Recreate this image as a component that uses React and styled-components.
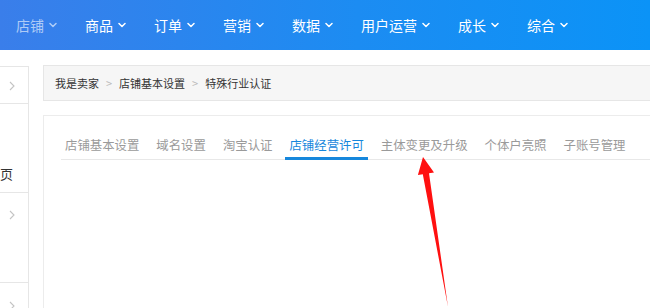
import React from 'react'
import styled, { createGlobalStyle } from 'styled-components'

const colors = {
  navLeft: '#3a7eea',
  navMid: '#1c8cf2',
  navRight: '#0b93f7',
  border: '#e6e6e6',
  crumbBg: '#f6f6f6',
  text: '#333333',
  muted: '#9a9a9a',
  active: '#1687dc',
  arrow: '#ff1010'
}

const GlobalStyle = createGlobalStyle`
  html, body {
    margin: 0;
    padding: 0;
    background: #ffffff;
    overflow: hidden;
  }

  body {
    font-family: "Noto Sans CJK SC", "Noto Sans", sans-serif;
  }
`

// ======================
// LAYOUT
// ======================

const Page = styled.div`
  position: relative;
  width: 650px;
  height: 308px;
  overflow: hidden;
`

const Body = styled.div`
  display: flex;
  height: 258px;
`

// ======================
// TOP NAV
// ======================

const Nav = styled.nav`
  display: flex;
  align-items: center;
  gap: 28px;
  height: 50px;
  padding-left: 16px;
  background: linear-gradient(to right, ${colors.navLeft} 0%, ${colors.navMid} 55%, ${colors.navRight} 100%);
`

const NavItem = styled.div`
  display: flex;
  align-items: center;
  gap: 5px;
  font-size: 14px;
  line-height: 20px;
  color: ${props => props.current ? 'rgba(255, 255, 255, 0.6)' : '#ffffff'};
  white-space: nowrap;
`

const Caret = ({ color }) => (
  <svg width='8' height='6' viewBox='0 0 8 6'>
    <polyline points='1,1.5 4,4.5 7,1.5' fill='none' stroke={color} strokeWidth='1.5' strokeLinecap='round' strokeLinejoin='round' />
  </svg>
)

// ======================
// SIDEBAR
// ======================

const Sidebar = styled.aside`
  flex: 0 0 28px;
  margin-top: 16px;
  border-top: 1px solid ${colors.border};
  border-right: 1px solid ${colors.border};
  overflow: hidden;
`

const SideRow = styled.div`
  display: flex;
  align-items: ${props => props.bottom ? 'flex-end' : 'flex-start'};
  justify-content: flex-end;
  height: ${props => props.h}px;
  padding: ${props => props.pad};
  box-sizing: border-box;
  border-bottom: ${props => props.last ? 'none' : `1px solid ${colors.border}`};
  font-size: 13px;
  line-height: 18px;
  color: ${colors.text};
  white-space: nowrap;
`

const Chevron = () => (
  <svg width='6' height='10' viewBox='0 0 6 10'>
    <polyline points='1,1 5,5 1,9' fill='none' stroke='#c4c4c4' strokeWidth='1.1' />
  </svg>
)

// ======================
// MAIN
// ======================

const Main = styled.main`
  flex: 1;
  margin-left: 14px;
  padding-top: 15px;
  min-width: 0;
`

const Breadcrumb = styled.div`
  display: flex;
  align-items: center;
  height: 34px;
  padding-left: 11px;
  border: 1px solid ${colors.border};
  border-right: none;
  background: ${colors.crumbBg};
  font-size: 11px;
  color: ${colors.text};
`

const Sep = styled.span`
  margin: 0 7px;
  color: #bbbbbb;
`

const Panel = styled.section`
  margin-top: 14px;
  height: 200px;
  border: 1px solid #ececec;
  border-right: none;
  border-bottom: none;
`

const TabBar = styled.div`
  display: flex;
  margin: 20px 0 0 17px;
  border-bottom: 1px solid #e8e8e8;
`

const Tab = styled.div`
  padding: 0 4px 3px;
  margin-right: 9px;
  margin-bottom: -1px;
  font-size: 12.4px;
  line-height: 18px;
  white-space: nowrap;
  color: ${props => props.active ? colors.active : colors.muted};
  border-bottom: 3px solid ${props => props.active ? colors.active : 'transparent'};
`

// ======================
// ANNOTATION
// ======================

const Arrow = styled.svg`
  position: absolute;
  left: 0;
  top: 0;
  pointer-events: none;
`

const navItems = ['店铺', '商品', '订单', '营销', '数据', '用户运营', '成长', '综合']
const tabs = ['店铺基本设置', '域名设置', '淘宝认证', '店铺经营许可', '主体变更及升级', '个体户亮照', '子账号管理']

export default function App () {
  return (
    <Page>
      <GlobalStyle />
      <Nav>
        {navItems.map((label, i) => (
          <NavItem key={label} current={i === 0}>
            {label}
            <Caret color={i === 0 ? 'rgba(255,255,255,0.6)' : '#ffffff'} />
          </NavItem>
        ))}
      </Nav>
      <Body>
        <Sidebar>
          <SideRow h={37} pad='14px 13px 0 0'><Chevron /></SideRow>
          <SideRow h={89} pad='0 15px 9px 0' bottom>店铺主页</SideRow>
          <SideRow h={90} pad='17px 13px 0 0'><Chevron /></SideRow>
          <SideRow h={60} pad='18px 13px 0 0' last><Chevron /></SideRow>
        </Sidebar>
        <Main>
          <Breadcrumb>
            我是卖家<Sep>&gt;</Sep>店铺基本设置<Sep>&gt;</Sep>特殊行业认证
          </Breadcrumb>
          <Panel>
            <TabBar>
              {tabs.map(t => (
                <Tab key={t} active={t === '店铺经营许可'}>{t}</Tab>
              ))}
            </TabBar>
          </Panel>
        </Main>
      </Body>
      <Arrow width='650' height='308' viewBox='0 0 650 308'>
        <polygon
          points='423,157 434,172.5 429,173.3 448,307 422.8,174.3 417.9,175.1'
          fill={colors.arrow}
        />
      </Arrow>
    </Page>
  )
}
